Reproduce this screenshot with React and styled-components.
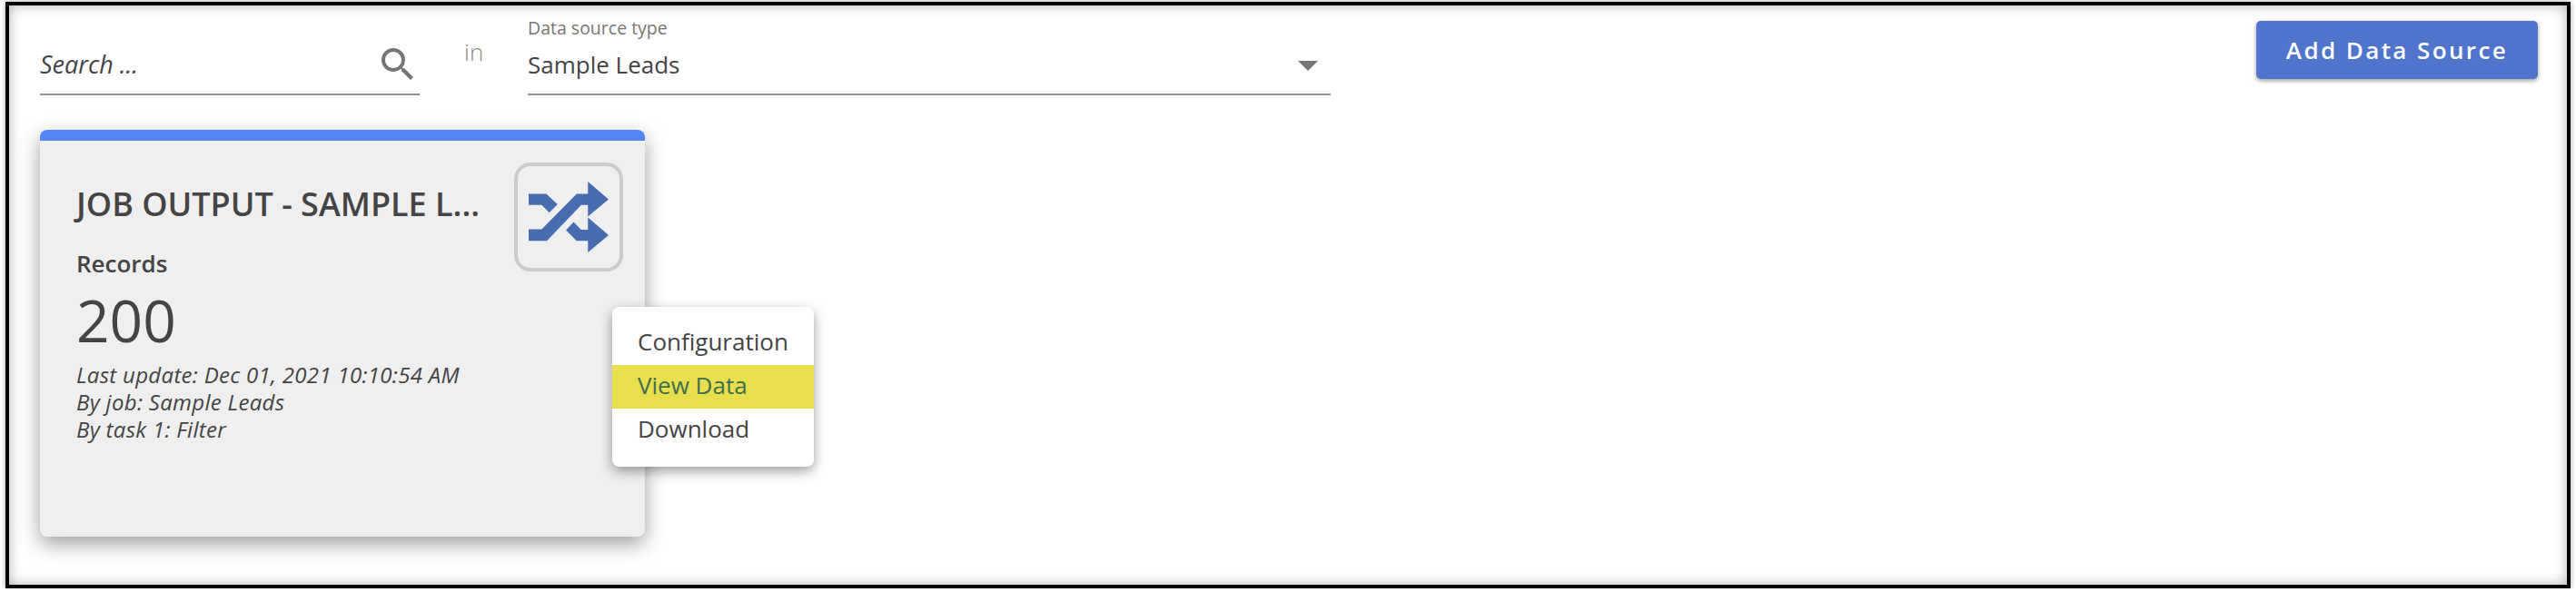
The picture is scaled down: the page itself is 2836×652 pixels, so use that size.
import React from "react";
import styled, { createGlobalStyle } from "styled-components";

const GlobalStyle = createGlobalStyle`
  html, body {
    margin: 0;
    padding: 0;
    background: #fff;
    font-family: "Open Sans", "Liberation Sans", sans-serif;
  }
`;

const Frame = styled.div`
  box-sizing: border-box;
  width: 2824px;
  height: 646px;
  margin: 2px 0 0 6px;
  padding: 0 32px 0 34px;
  border: 4px solid #000;
  background: #fff;
  box-shadow: inset 0 0 14px rgba(0, 0, 0, 0.3), 0 0 6px rgba(0, 0, 0, 0.35);
`;

const Toolbar = styled.div`
  display: flex;
  align-items: flex-start;
  height: 99px;
`;

const SearchField = styled.div`
  box-sizing: border-box;
  display: flex;
  align-items: flex-end;
  justify-content: space-between;
  width: 418px;
  height: 99px;
  padding-bottom: 8px;
  border-bottom: 2px solid #909090;
`;

const SearchText = styled.span`
  margin-bottom: 6px;
  font-size: 27px;
  font-style: italic;
  line-height: 36px;
  color: #444;
`;

const InLabel = styled.span`
  width: 119px;
  padding: 33px 0 0 49px;
  box-sizing: border-box;
  font-size: 26px;
  font-weight: 300;
  line-height: 36px;
  color: #8a8a8a;
`;

const SelectField = styled.div`
  box-sizing: border-box;
  width: 884px;
  height: 99px;
  padding-top: 12px;
  border-bottom: 2px solid #909090;
`;

const SelectLabel = styled.div`
  font-size: 19.5px;
  line-height: 26px;
  color: #777;
`;

const SelectRow = styled.div`
  display: flex;
  align-items: center;
  justify-content: space-between;
  height: 36px;
  margin-top: 9px;
  padding-right: 14px;
  font-size: 26px;
  color: #444;
`;

const Caret = styled.span`
  width: 0;
  height: 0;
  margin-top: 2px;
  border-left: 11px solid transparent;
  border-right: 11px solid transparent;
  border-top: 11px solid #757575;
`;

const AddButton = styled.button`
  width: 310px;
  height: 64px;
  margin: 17px 0 0 auto;
  padding: 0;
  border: 0;
  border-radius: 5px;
  background: #5074cc;
  color: #fff;
  font-family: inherit;
  font-size: 26px;
  font-weight: 600;
  letter-spacing: 2.4px;
  box-shadow: 0 2px 5px rgba(0, 0, 0, 0.4);
`;

const Card = styled.div`
  position: relative;
  box-sizing: border-box;
  width: 666px;
  height: 448px;
  margin-top: 38px;
  padding: 24px 24px 0 40px;
  border-top: 12px solid #5585f5;
  border-radius: 8px;
  background: #efefef;
  color: #444;
  box-shadow: 0 8px 22px rgba(0, 0, 0, 0.38);
`;

const CardHead = styled.div`
  display: flex;
  justify-content: space-between;
  align-items: flex-start;
`;

const CardIntro = styled.div`
  min-width: 0;
  padding-top: 23px;
`;

const CardTitle = styled.div`
  white-space: nowrap;
  font-size: 36px;
  font-weight: 600;
  line-height: 46px;
`;

const MetricLabel = styled.div`
  margin-top: 25px;
  font-size: 26px;
  font-weight: 600;
  line-height: 34px;
`;

const IconBox = styled.div`
  box-sizing: border-box;
  flex: none;
  display: flex;
  align-items: center;
  justify-content: center;
  width: 120px;
  height: 120px;
  border: 4px solid #ccc;
  border-radius: 18px;
`;

const MetricValue = styled.div`
  margin-top: 4px;
  font-size: 64px;
  line-height: 84px;
  color: #444;
`;

const Meta = styled.div`
  margin-top: 3px;
  font-size: 24px;
  font-style: italic;
  line-height: 30px;
  letter-spacing: 0.3px;
`;

const Menu = styled.ul`
  position: absolute;
  left: 630px;
  top: 183px;
  width: 222px;
  margin: 0;
  padding: 16px 0;
  list-style: none;
  border-radius: 8px;
  background: #fff;
  box-shadow: 0 5px 14px rgba(0, 0, 0, 0.38);
`;

const MenuItem = styled.li`
  height: 48px;
  padding-left: 28px;
  font-size: 26px;
  line-height: 44px;
  color: ${(p) => (p.$active ? "#3f6f4f" : "#444")};
  background: ${(p) => (p.$active ? "#e9de4c" : "transparent")};
`;

function SearchIcon() {
  return (
    <svg width="48" height="48" viewBox="0 0 24 24" fill="#757575">
      <path d="M15.5 14h-.79l-.28-.27A6.47 6.47 0 0 0 16 9.5 6.5 6.5 0 1 0 9.5 16c1.61 0 3.09-.59 4.23-1.57l.27.28v.79l5 4.99L20.49 19l-4.99-5zm-6 0C7.01 14 5 11.99 5 9.5S7.01 5 9.5 5 14 7.01 14 9.5 11.99 14 9.5 14z" />
    </svg>
  );
}

function ShuffleIcon() {
  return (
    <svg width="88" height="78" viewBox="0 0 263 233" fill="#476cb2">
      <path d="M0 40H58L95 75 68 102 43 77H0z" />
      <path d="M0 157H43L158 40H195V0L263 58 195 115V77H173L60 195H0z" />
      <path d="M123 160L148 133 173 158H195V118L263 176 195 233V195H158z" />
    </svg>
  );
}

export default function App() {
  return (
    <>
      <GlobalStyle />
      <Frame>
        <Toolbar>
          <SearchField>
            <SearchText>Search ...</SearchText>
            <SearchIcon />
          </SearchField>
          <InLabel>in</InLabel>
          <SelectField>
            <SelectLabel>Data source type</SelectLabel>
            <SelectRow>
              Sample Leads
              <Caret />
            </SelectRow>
          </SelectField>
          <AddButton>Add Data Source</AddButton>
        </Toolbar>
        <Card>
          <CardHead>
            <CardIntro>
              <CardTitle>JOB OUTPUT - SAMPLE L...</CardTitle>
              <MetricLabel>Records</MetricLabel>
            </CardIntro>
            <IconBox>
              <ShuffleIcon />
            </IconBox>
          </CardHead>
          <MetricValue>200</MetricValue>
          <Meta>
            <div>Last update: Dec 01, 2021 10:10:54 AM</div>
            <div>By job: Sample Leads</div>
            <div>By task 1: Filter</div>
          </Meta>
          <Menu>
            <MenuItem>Configuration</MenuItem>
            <MenuItem $active>View Data</MenuItem>
            <MenuItem>Download</MenuItem>
          </Menu>
        </Card>
      </Frame>
    </>
  );
}
